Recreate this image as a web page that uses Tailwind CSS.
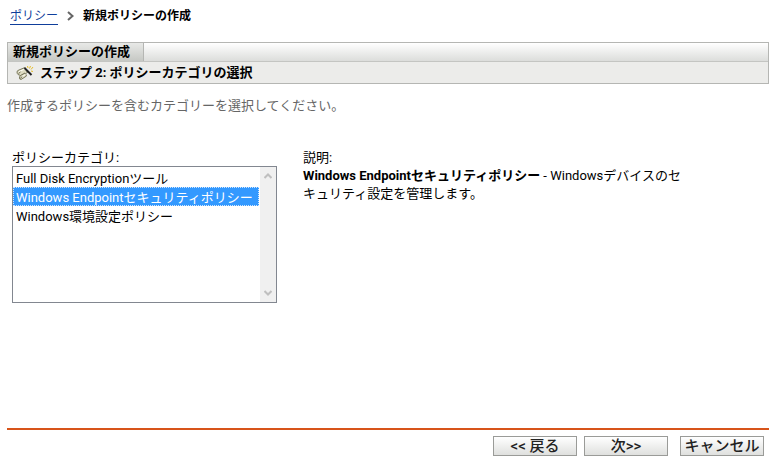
<!DOCTYPE html>
<html lang="ja">
<head>
  <meta charset="UTF-8" />
  <meta name="viewport" content="width=device-width, initial-scale=1.0" />
  <title>新規ポリシーの作成</title>
  <script src="https://cdn.jsdelivr.net/npm/@tailwindcss/browser@4"></script>
</head>
<body class="flex min-h-screen flex-col bg-white pr-[6px] pb-[6px] pl-[7px] font-[Roboto,'Noto_Sans_CJK_JP',sans-serif] text-[13px] leading-[19px] text-black">

  <!-- Breadcrumb -->
  <nav class="flex items-center pt-[6px] pl-[3px] text-[12px] leading-[20px]">
    <a href="#" class="border-b border-[#0f3e9b] leading-[16px] text-[#0f3e9b]">ポリシー</a>
    <svg class="ml-[9px] h-[10px] w-[8px]" viewBox="0 0 8 10" fill="none" stroke="#666" stroke-width="2"><path d="M1 1 L5.5 5 L1 9" /></svg>
    <span class="ml-[8px] font-bold">新規ポリシーの作成</span>
  </nav>

  <!-- Wizard header -->
  <header class="mt-[16px] border border-[#b5b6b3] font-bold">
    <div class="flex h-[19px] border-b border-[#c4c5c2] bg-linear-to-b from-white to-[#dcdddb]">
      <h1 class="w-[136px] border-r border-[#b5b6b3] bg-linear-to-b from-[#e8e9e7] to-[#c6c8c4] pl-[5px] leading-[18px]">新規ポリシーの作成</h1>
    </div>
    <div class="flex h-[21px] items-center bg-[#ececea] pl-[8px]">
      <svg class="h-[16px] w-[18px]" viewBox="0 0 18 16" fill="none">
        <path d="M1 7 Q1 5.5 3 5 L9 2.5 L11.5 7.5 L9.5 8.5 L10.5 11 L5 14.5 Q3 14.5 3.5 12 L4.5 10.5 L2 9.5 Q1 8.5 1 7 Z" fill="#dedcc2" stroke="#7b7a5e" />
        <path d="M3 6.5 L9 4 M5.5 12 L9.5 9.5" stroke="#fffef4" />
        <path d="M2.5 8.5 L4.5 7 M4.5 10.5 L9 8 M4.5 13.5 L6 11.5" stroke="#6a694f" />
        <path d="M8.5 3 L15.5 10" stroke="#222" stroke-width="2" />
        <path d="M11.5 1 L12 3 M14.5 1 L13.5 3.5 M17 2 L15 4.5 M17 6.5 L15 6" stroke="#e6bd2b" />
      </svg>
      <h2 class="ml-[6px]">ステップ 2: ポリシーカテゴリの選択</h2>
    </div>
  </header>

  <p class="mt-[12px] text-[#666]">作成するポリシーを含むカテゴリーを選択してください。</p>

  <main class="mt-[33px] mb-4 flex gap-[26px] pl-[5px]">
    <div class="w-[265px] shrink-0">
      <label for="category" class="block h-[18px]">ポリシーカテゴリ:</label>
      <div class="flex h-[137px] border border-[#828790]">
        <select id="category" size="7" class="min-w-0 flex-1 appearance-none overflow-hidden bg-white pt-px pr-px outline-none">
          <option class="min-h-0 px-[3px] py-0 leading-[19px]">Full Disk Encryptionツール</option>
          <option selected class="min-h-0 px-[3px] py-0 leading-[19px] checked:bg-[linear-gradient(#3399ff,#3399ff)] checked:[-webkit-text-fill-color:#fff] checked:outline checked:outline-dotted checked:-outline-offset-1 checked:outline-[#cfe6ff]">Windows Endpointセキュリティポリシー</option>
          <option class="min-h-0 px-[3px] py-0 leading-[19px]">Windows環境設定ポリシー</option>
        </select>
        <div class="flex w-[16px] flex-col items-center justify-between bg-[#f0f0f0] py-[5px]">
          <svg class="h-[8px] w-[8px]" viewBox="0 0 8 8" fill="none" stroke="#bfbfbf" stroke-width="2"><path d="M0.5 6 L4 2.5 L7.5 6" /></svg>
          <svg class="h-[8px] w-[8px]" viewBox="0 0 8 8" fill="none" stroke="#bfbfbf" stroke-width="2"><path d="M0.5 2 L4 5.5 L7.5 2" /></svg>
        </div>
      </div>
    </div>

    <section class="max-w-[390px] pt-px leading-[18px]">
      <h3>説明:</h3>
      <p><b>Windows Endpointセキュリティポリシー</b> - Windowsデバイスのセキュリティ設定を管理します。</p>
    </section>
  </main>

  <!-- Wizard buttons -->
  <footer class="mt-auto flex justify-end border-t-2 border-[#d7541a] pt-[6px] pr-[5px] text-[15px] font-medium text-[#222]">
    <button type="button" class="h-[20px] w-[84px] border border-[#9a9b98] bg-linear-to-b from-white to-[#dfe0de] leading-[18px]">&lt;&lt; 戻る</button>
    <button type="button" class="ml-[7px] h-[20px] w-[84px] border border-[#9a9b98] bg-linear-to-b from-white to-[#dfe0de] leading-[18px]">次&gt;&gt;</button>
    <button type="button" class="ml-[12px] h-[20px] w-[84px] border border-[#9a9b98] bg-linear-to-b from-white to-[#dfe0de] leading-[18px]">キャンセル</button>
  </footer>

</body>
</html>
